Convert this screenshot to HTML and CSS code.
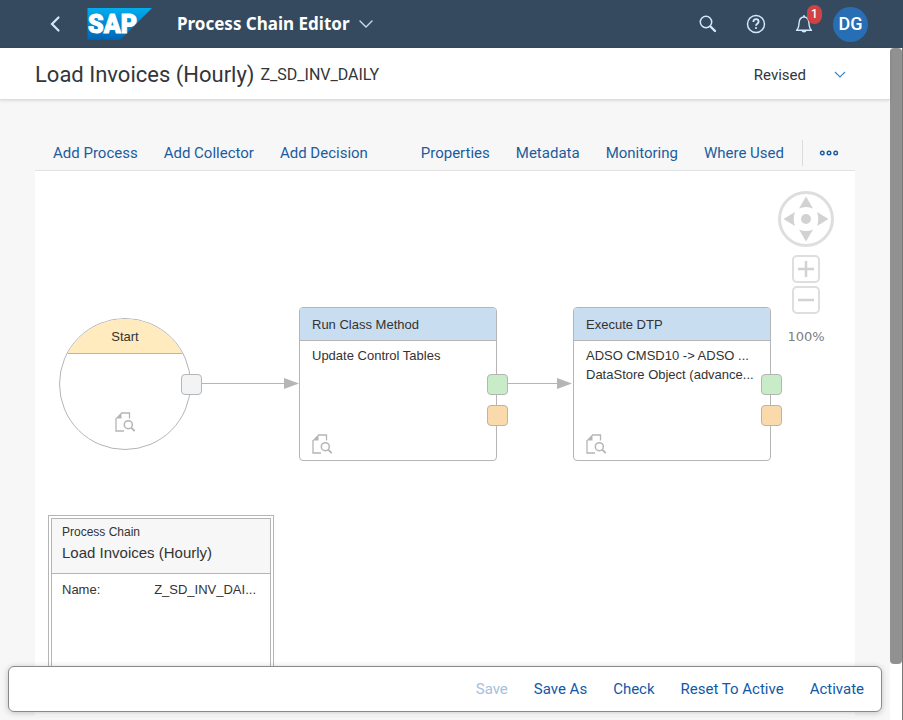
FILE: index.html
```html
<!DOCTYPE html>
<html lang="en">
<head>
<meta charset="utf-8">
<meta name="viewport" content="width=device-width, initial-scale=1">
<title>Process Chain Editor</title>
<link rel="stylesheet" href="styles.css">
</head>
<body>
<svg class="defs" aria-hidden="true">
  <symbol id="doc-search" viewBox="0 0 20 20">
    <path d="M9 19H1V6M6 1h8.500v5.500" fill="none" stroke="currentColor" stroke-width="1.300"/>
    <path d="M0.500 6.500L6.500 0.300V6.500Z" fill="currentColor"/>
    <circle cx="13.300" cy="12.700" r="4" fill="none" stroke="currentColor" stroke-width="1.500"/>
    <path d="M16.200 15.600l3.500 3.400" stroke="currentColor" stroke-width="1.800"/>
  </symbol>
</svg>
<header class="shell">
  <button class="icon-btn back" type="button" aria-label="Back">
    <svg width="12" height="18" viewBox="0 0 12 18"><path d="M9.500 2.500L3 9l6.500 6.500" fill="none" stroke="currentColor" stroke-width="2.200" stroke-linecap="round"/></svg>
  </button>
  <a class="logo" href="#" aria-label="SAP home">
    <svg width="66" height="34" viewBox="0 0 66 34">
      <defs><linearGradient id="blue" x1="0" y1="0" x2="0" y2="1"><stop offset="0" stop-color="#00aeef"/><stop offset="1" stop-color="#0063b5"/></linearGradient></defs>
      <path d="M0.500 1H65L33 33H0.500Z" fill="url(#blue)"/>
      <text class="logo-text" x="1" y="26">SAP</text>
    </svg>
  </a>
  <button class="app-title" type="button">Process Chain Editor
    <svg width="14" height="8" viewBox="0 0 14 8"><path d="M1 1l6 6 6-6" fill="none" stroke="#c4dcf2" stroke-width="1.400" stroke-linecap="round"/></svg>
  </button>
  <div class="shell-tools">
    <button class="icon-btn" type="button" aria-label="Search">
      <svg width="18" height="18" viewBox="0 0 18 18" fill="none" stroke="currentColor"><circle cx="7" cy="7" r="5.700" stroke-width="1.500"/><path d="M11.500 11.500l4.500 4.500" stroke-width="2.400" stroke-linecap="round"/></svg>
    </button>
    <button class="icon-btn" type="button" aria-label="Help">
      <svg width="20" height="20" viewBox="0 0 20 20" fill="none" stroke="currentColor"><circle cx="10" cy="10" r="8.500" stroke-width="1.500"/><path d="M7.400 8c0-1.700 1.100-2.800 2.600-2.800s2.600 1 2.600 2.500c0 2-2.600 2-2.600 4" stroke-width="1.800"/><circle cx="10" cy="14" r=".7" fill="currentColor" stroke-width=".8"/></svg>
    </button>
    <button class="icon-btn bell" type="button" aria-label="Notifications, 1 new">
      <svg width="18" height="20" viewBox="0 0 18 20" fill="none" stroke="currentColor"><path d="M1.500 16.200c2-1.600 2.300-3.200 2.500-6.700C4.200 5.500 5.800 3 9 3s4.800 2.500 5 6.500c.2 3.500.5 5.100 2.500 6.700z" stroke-width="1.400" stroke-linejoin="round"/><path d="M9 3V1.200" stroke-width="1.800"/><path d="M6.500 16.500h5a2.500 2 0 0 1-5 0z" fill="currentColor" stroke="none"/></svg>
      <span class="badge">1</span>
    </button>
    <button class="avatar" type="button">DG</button>
  </div>
</header>
<div class="body">
  <main class="page">
    <div class="page-head">
      <h1>Load Invoices (Hourly)</h1>
      <span class="tech-name">Z_SD_INV_DAILY</span>
      <button class="version" type="button">Revised
        <svg width="12" height="7" viewBox="0 0 12 7"><path d="M1 1l5 5 5-5" fill="none" stroke="#3f86cb" stroke-width="1.200"/></svg>
      </button>
    </div>
    <section class="content">
      <div class="toolbar">
        <button type="button">Add Process</button>
        <button type="button">Add Collector</button>
        <button type="button">Add Decision</button>
        <span class="spacer"></span>
        <button type="button">Properties</button>
        <button type="button">Metadata</button>
        <button type="button">Monitoring</button>
        <button type="button">Where Used</button>
        <span class="rule"></span>
        <button class="more" type="button" aria-label="More">
          <svg width="20" height="8" viewBox="0 0 20 8" fill="none" stroke="currentColor" stroke-width="1.400"><circle cx="3.300" cy="4" r="1.800"/><circle cx="10" cy="4" r="1.800"/><circle cx="16.700" cy="4" r="1.800"/></svg>
        </button>
      </div>
      <div class="canvas">
        <svg class="links" width="800" height="400" aria-hidden="true">
          <g stroke="#b5b5b5" fill="#b5b5b5"><path d="M166 212.500H250M472 212.500H524"/><path stroke="none" d="M249 207v11l15-5.500zM522 207v11l15-5.500z"/></g>
        </svg>
        <div class="start"><div class="start-head">Start</div><svg class="doc"><use href="#doc-search"/></svg></div>
        <span class="port start-port"></span>
        <article class="node run">
          <h2>Run Class Method</h2>
          <p>Update Control Tables</p>
          <svg class="doc"><use href="#doc-search"/></svg>
          <span class="port ok"></span><span class="port warn"></span>
        </article>
        <article class="node dtp">
          <h2>Execute DTP</h2>
          <p>ADSO CMSD10 -&gt; ADSO ...<br>DataStore Object (advance...</p>
          <svg class="doc"><use href="#doc-search"/></svg>
          <span class="port ok"></span><span class="port warn"></span>
        </article>
        <article class="chain">
          <div class="chain-inner">
            <header><small>Process Chain</small><h2>Load Invoices (Hourly)</h2></header>
            <dl><dt>Name:</dt><dd>Z_SD_INV_DAI...</dd></dl>
          </div>
        </article>
        <div class="navigator">
          <svg width="56" height="56" viewBox="0 0 56 56" role="img" aria-label="Pan">
            <circle cx="28" cy="28" r="26.500" fill="none" stroke="#dedede" stroke-width="3"/>
            <g fill="#d2d2d2"><circle cx="28" cy="28" r="5"/><path d="M28 5.500l7 12q-7-3-14 0zM28 50.500l7-12q-7 3-14 0zM5.500 28l11.500-7q-2.500 7 0 14zM50.500 28l-11.500-7q2.500 7 0 14z"/></g>
          </svg>
          <button type="button" aria-label="Zoom in"><svg width="18" height="18"><path d="M1 9h16M9 1v16" stroke="#d2d2d2" stroke-width="2.500"/></svg></button>
          <button type="button" aria-label="Zoom out"><svg width="18" height="18"><path d="M1 9h16" stroke="#d2d2d2" stroke-width="2.500"/></svg></button>
          <span class="zoom">100%</span>
        </div>
      </div>
    </section>
    <footer class="actions">
      <button type="button" disabled>Save</button>
      <button type="button">Save As</button>
      <button type="button">Check</button>
      <button type="button">Reset To Active</button>
      <button type="button">Activate</button>
    </footer>
  </main>
  <div class="scroll-track"><div class="thumb"></div></div>
</div>
</body>
</html>
```
FILE: styles.css
```css
* { box-sizing: border-box; }
body {
  margin: 0;
  height: 100vh;
  display: flex;
  flex-direction: column;
  overflow: hidden;
  font: 15px/20px Roboto, "Noto Sans", sans-serif;
  color: #32363a;
  background: #f7f7f7;
}
button { border: 0; padding: 0; margin: 0; background: none; font: inherit; color: inherit; white-space: nowrap; }
svg { display: block; }
h1, h2, p, dl, dd { margin: 0; }
.defs { position: absolute; width: 0; height: 0; }

.shell { flex: none; height: 48px; background: #354a5f; display: flex; align-items: center; padding: 0 35px 0 37px; color: #d1e8ff; }
.icon-btn { width: 36px; height: 36px; display: flex; align-items: center; justify-content: center; position: relative; }
.logo { margin-left: 14px; }
.logo-text { font: 900 25px Roboto, sans-serif; fill: #fff; stroke: #fff; stroke-width: 1px; }
.app-title { margin-left: 24px; display: flex; align-items: center; gap: 9px; font-family: "Noto Sans", sans-serif; font-size: 17px; font-weight: 700; color: #fff; }
.shell-tools { margin-left: auto; display: flex; align-items: center; gap: 12px; }
.badge { position: absolute; left: 21px; top: -1px; min-width: 15px; height: 19px; border-radius: 8px; background: #d04343; color: #fff; font-size: 12px; line-height: 19px; font-weight: 500; text-align: center; }
.avatar { width: 35px; height: 35px; border-radius: 50%; background: #286eb4; color: #fff; font-size: 18px; font-weight: 500; margin-left: -1px; }

.body { flex: 1; min-height: 0; display: flex; }
.page { flex: 1; min-width: 0; display: flex; flex-direction: column; position: relative; }
.page-head { flex: none; height: 52px; background: #fff; border-bottom: 1px solid #dcdcdc; box-shadow: 0 1px 3px #0000001a; display: flex; align-items: center; padding: 2px 44px 0 35px; }
h1 { font-size: 22px; line-height: 28px; font-weight: 400; white-space: nowrap; }
.tech-name { margin-left: 6px; font-size: 16px; }
.version { margin-left: auto; display: flex; align-items: center; gap: 28px; }

.content { flex: 1; min-height: 0; display: flex; flex-direction: column; padding: 35px 35px 4px; }
.toolbar { flex: none; height: 36px; border-bottom: 1px solid #e2e2e2; display: flex; align-items: center; gap: 26px; padding: 0 16px 0 18px; color: #1c5c9f; }
.spacer { flex: 1; }
.rule { width: 1px; height: 26px; background: #dcdcdc; margin: 0 -10px 0 -8px; }
.canvas { flex: 1; min-height: 0; position: relative; overflow: hidden; background: #fff; font: 13px/19px "Liberation Sans", Arial, sans-serif; color: #333; }
.links { position: absolute; left: 0; top: 0; }
.doc { position: absolute; left: 12px; bottom: 6px; width: 20px; height: 20px; color: #b5b5b5; }

.start { position: absolute; left: 24px; top: 147px; width: 132px; height: 132px; border: 1px solid #b5b5b5; border-radius: 50%; overflow: hidden; background: #fff; }
.start-head { height: 35px; background: #ffebbe; border-bottom: 1px solid #b5b5b5; text-align: center; line-height: 35px; }
.start .doc { left: 55px; bottom: 17px; }
.port { position: absolute; width: 21px; height: 21px; border: 1px solid #b5b5b5; border-radius: 4px; background: #f2f3f5; }
.start-port { left: 146px; top: 203px; }
.node { position: absolute; top: 136px; width: 198px; height: 154px; border: 1px solid #b5b5b5; border-radius: 4px; background: #fff; }
.run { left: 264px; }
.dtp { left: 538px; }
.node h2 { height: 33px; padding-left: 12px; background: #c9ddf1; border-bottom: 1px solid #b5b5b5; border-radius: 3px 3px 0 0; font-size: 13px; line-height: 33px; font-weight: 400; }
.node p { padding: 5px 0 0 12px; white-space: nowrap; }
.node .port { right: -12px; }
.node .ok { top: 66px; background: #c8ecc8; }
.node .warn { top: 97px; background: #fad9ab; }

.chain { position: absolute; left: 13px; top: 344px; width: 226px; height: 180px; border: 1px solid #b5b5b5; padding: 2px; background: #fff; }
.chain-inner { height: 100%; border: 1px solid #b5b5b5; }
.chain header { height: 55px; padding: 4px 10px; background: #f7f7f7; border-bottom: 1px solid #b5b5b5; }
.chain small { display: block; font-size: 12px; }
.chain h2 { font-size: 15px; line-height: 22px; font-weight: 400; }
.chain dl { display: flex; justify-content: space-between; padding: 6px 14px 0 10px; }

.navigator { position: absolute; right: 21px; top: 20px; display: flex; flex-direction: column; align-items: center; }
.navigator button { width: 28px; height: 28px; border: 2px solid #dedede; border-radius: 5px; display: flex; align-items: center; justify-content: center; margin-top: 3px; }
.navigator svg + button { margin-top: 8px; }
.zoom { margin-top: 13px; font: 13px/20px "DejaVu Sans", sans-serif; color: #808080; }

.actions { position: absolute; left: 8px; right: 8px; bottom: 8px; height: 46px; border: 1px solid #8a8a8a; border-radius: 6px; background: #fff; box-shadow: 0 1px 6px #00000038; display: flex; align-items: center; justify-content: flex-end; gap: 26px; padding: 0 17px; color: #0f59a8; }
.actions :disabled { color: #a4c0de; }
.scroll-track { flex: none; width: 13px; padding-bottom: 56px; background: #fff; border-right: 1px solid #777; }
.thumb { height: 100%; background: #919191; border-radius: 4px; }
```
